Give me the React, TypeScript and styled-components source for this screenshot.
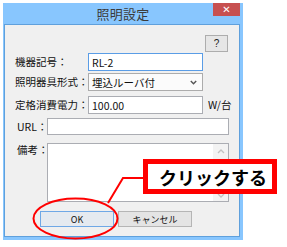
import React from "react";
import styled, { createGlobalStyle } from "styled-components";

const Global = createGlobalStyle`
  html, body { margin: 0; padding: 0; background: #ffffff; }
  body { font-family: "Noto Sans CJK JP", "Noto Sans", sans-serif; }
`;

const FONT = `"Noto Sans CJK JP", "Noto Sans", sans-serif`;

const Page = styled.div`
  position: relative;
  width: 287px;
  height: 247px;
  padding: 3px 0 0 3px;
  box-sizing: border-box;
  overflow: hidden;
`;

const Window = styled.div`
  width: 240px;
  height: 237px;
  box-sizing: border-box;
  background: #88c6fe;
  display: flex;
  flex-direction: column;
  padding: 0 3px 3px 1px;
`;

const TitleBar = styled.div`
  height: 21px;
  flex-shrink: 0;
  display: grid;
  grid-template-columns: 1fr auto 1fr;
  align-items: start;
`;

const Title = styled.div`
  grid-column: 2;
  font-family: ${FONT};
  font-size: 13px;
  line-height: 21px;
  color: #3b3b3b;
  letter-spacing: 0.3px;
  padding-left: 2px;
`;

const CloseButton = styled.div`
  grid-column: 3;
  justify-self: end;
  width: 27px;
  height: 13px;
  background: #c75050;
  color: #ffffff;
  display: flex;
  align-items: center;
  justify-content: center;
  font-family: "DejaVu Sans", sans-serif;
  font-weight: bold;
  font-size: 10px;
  line-height: 1;
`;

const Client = styled.div`
  flex: 1;
  min-height: 0;
  background: #f0f0f0;
  border: 1px solid #5fa0dc;
  display: flex;
  flex-direction: column;
  padding: 10px 10px 0 10px;
  box-sizing: border-box;
`;

const HelpRow = styled.div`
  display: flex;
  justify-content: flex-end;
  padding-right: 1px;
`;

const SmallButton = styled.div`
  width: 23px;
  height: 17px;
  box-sizing: border-box;
  border: 1px solid #adadad;
  background: #e6e6e6;
  display: flex;
  align-items: center;
  justify-content: center;
  font-family: "Liberation Sans", sans-serif;
  font-size: 10px;
  color: #222;
`;

const Row = styled.div<{ $top: number }>`
  display: flex;
  align-items: center;
  flex-shrink: 0;
  margin-top: ${(p) => p.$top}px;
`;

const TopRow = styled(Row)`
  align-items: flex-start;
`;

const Label = styled.div<{ $w: number; $indent?: number }>`
  width: ${(p) => p.$w}px;
  flex-shrink: 0;
  padding-left: ${(p) => p.$indent ?? 0}px;
  box-sizing: border-box;
  font-family: ${FONT};
  font-size: 10.5px;
  line-height: 14px;
  color: #111;
  white-space: nowrap;
`;

const Field = styled.div<{ $w: number; $h: number; $focus?: boolean }>`
  width: ${(p) => p.$w}px;
  height: ${(p) => p.$h}px;
  flex-shrink: 0;
  box-sizing: border-box;
  border: 1px solid ${(p) => (p.$focus ? "#5a9de6" : "#abadb3")};
  background: #ffffff;
  display: flex;
  align-items: center;
  padding-left: 3px;
  font-family: ${FONT};
  font-size: 10.5px;
  color: #111;
  white-space: nowrap;
`;

const SelectBox = styled(Field)`
  justify-content: space-between;
  padding-right: 5px;
  border-color: #acacac;
  background: #fbfbfb;
`;

const Unit = styled.div`
  margin-left: 5px;
  flex-shrink: 0;
  white-space: nowrap;
  font-family: ${FONT};
  font-size: 10.5px;
  line-height: 14px;
  color: #111;
`;

const MemoBox = styled.div`
  width: 182px;
  height: 59px;
  flex-shrink: 0;
  box-sizing: border-box;
  border: 1px solid #abadb3;
  background: #ffffff;
  display: flex;
  justify-content: flex-end;
`;

const ScrollTrack = styled.div`
  width: 15px;
  height: 100%;
  background: #f3f3f3;
  display: flex;
  flex-direction: column;
  justify-content: space-between;
  align-items: center;
  padding: 5px 0 3px;
  box-sizing: border-box;
`;

const ButtonRow = styled.div`
  display: flex;
  flex-shrink: 0;
  gap: 4px;
  margin-top: 9px;
  padding-left: 25px;
`;

const DialogButton = styled.div<{ $default?: boolean }>`
  width: 74px;
  height: 16px;
  flex-shrink: 0;
  box-sizing: border-box;
  border: 1px solid ${(p) => (p.$default ? "#6fa8e6" : "#b5b5b5")};
  background: ${(p) => (p.$default ? "#e5eaf0" : "#e4e4e4")};
  display: flex;
  align-items: center;
  justify-content: center;
  font-family: ${FONT};
  font-size: 9px;
  color: #111;
  white-space: nowrap;
`;

const Overlay = styled.svg`
  position: absolute;
  left: 0;
  top: 0;
  pointer-events: none;
`;

const CalloutBox = styled.div`
  position: absolute;
  left: 143px;
  top: 159px;
  width: 134px;
  height: 35px;
  box-sizing: border-box;
  border: 5px solid #ff0000;
  background: #ffffff;
  display: flex;
  align-items: center;
  padding-left: 11px;
  font-family: ${FONT};
  font-weight: bold;
  font-size: 18px;
  line-height: 1;
  color: #000;
  white-space: nowrap;
`;

const Chevron = ({ up }: { up?: boolean }) => (
  <svg width="8" height="5" viewBox="0 0 8 5">
    <path d={up ? "M1 4 L4 1 L7 4" : "M1 1 L4 4 L7 1"} fill="none" stroke="#c2c2c2" strokeWidth="1.3" />
  </svg>
);

const SelectArrow = () => (
  <svg width="7" height="5" viewBox="0 0 7 5">
    <path d="M0.8 1 L3.5 3.8 L6.2 1" fill="none" stroke="#555" strokeWidth="1.4" />
  </svg>
);

export default function App() {
  return (
    <>
      <Global />
      <Page>
        <Window>
          <TitleBar>
            <Title>照明設定</Title>
            <CloseButton>✕</CloseButton>
          </TitleBar>
          <Client>
            <HelpRow>
              <SmallButton>?</SmallButton>
            </HelpRow>
            <Row $top={1}>
              <Label $w={73}>機器記号：</Label>
              <Field $w={115} $h={18} $focus>
                RL-2
              </Field>
            </Row>
            <Row $top={2}>
              <Label $w={73}>照明器具形式：</Label>
              <SelectBox $w={115} $h={18}>
                <span>埋込ルーバ付</span>
                <SelectArrow />
              </SelectBox>
            </Row>
            <Row $top={5}>
              <Label $w={73}>定格消費電力：</Label>
              <Field $w={115} $h={18}>
                100.00
              </Field>
              <Unit>W/台</Unit>
            </Row>
            <Row $top={4}>
              <Label $w={32} $indent={2}>URL：</Label>
              <Field $w={182} $h={17} />
            </Row>
            <TopRow $top={8}>
              <Label $w={32} $indent={2}>備考：</Label>
              <MemoBox>
                <ScrollTrack>
                  <Chevron up />
                  <Chevron />
                </ScrollTrack>
              </MemoBox>
            </TopRow>
            <ButtonRow>
              <DialogButton $default>OK</DialogButton>
              <DialogButton>キャンセル</DialogButton>
            </ButtonRow>
          </Client>
        </Window>
        <Overlay width="287" height="247" viewBox="0 0 287 247">
          <ellipse cx="75.5" cy="218.5" rx="42" ry="20" fill="none" stroke="#ff0000" strokeWidth="2" />
          <polyline points="145,178 123,178 108,203" fill="none" stroke="#ff0000" strokeWidth="2" />
        </Overlay>
        <CalloutBox>クリックする</CalloutBox>
      </Page>
    </>
  );
}
